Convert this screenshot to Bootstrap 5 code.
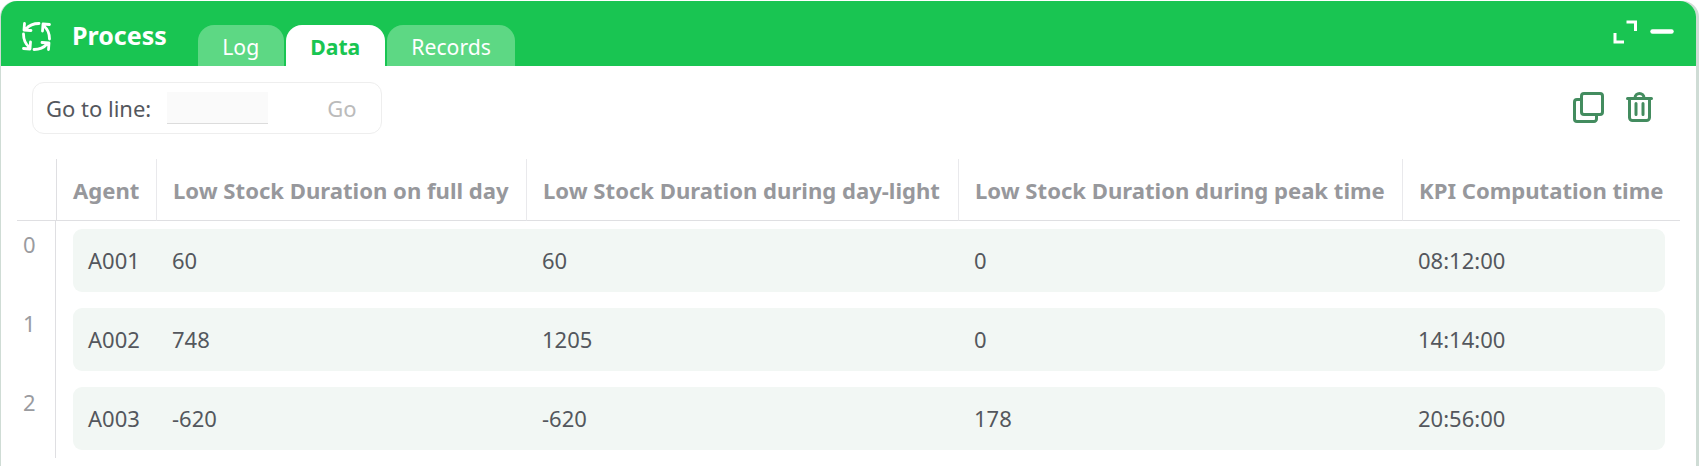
<!DOCTYPE html>
<html lang="en">
<head>
    <meta charset="UTF-8">
    <title>Process</title>
    <link href="https://cdn.jsdelivr.net/npm/bootstrap@5.3.0/dist/css/bootstrap.min.css" rel="stylesheet">
    <style>
        body {
            font-family: "Noto Sans", sans-serif;
            font-size: 22px;
            color: #54575d;
            background: #fff;
            overflow: hidden;
        }
        .proc-window {
            margin: 1px 4px 0 1px;
            height: 465px;
            border-radius: 16px 16px 0 0;
            box-shadow: -1px 0 0 #cfdcd5, 3px 0 0 #cfdcd5;
        }
        .proc-head {
            height: 65px;
            background: #19c552;
            color: #fff;
            border-radius: 16px 16px 0 0;
            padding-left: 20px;
            padding-right: 22px;
        }
        .proc-icon { width: 31px; height: 31px; margin-top: 20px; }
        .proc-title {
            font-size: 25px;
            font-weight: 700;
            margin: 18px 31px 0 20px;
            line-height: 32px;
        }
        .proc-tab {
            height: 41px;
            margin-top: 24px;
            margin-right: 2px;
            padding: 5px 24.5px 0;
            line-height: 33px;
            border-radius: 16px 16px 0 0;
            background: #5dd884;
            font-size: 21.2px;
        }
        .proc-tab.active-tab { background: #fff; color: #19c552; font-weight: 700; }
        .head-btns { margin-left: auto; padding-top: 19px; gap: 13px; }
        .goto-box {
            width: 350px;
            height: 52px;
            margin: 16px 0 0 31px;
            border: 1px solid #eeeeee;
            border-radius: 12px;
            padding-left: 13px;
        }
        .goto-input {
            width: 101px;
            height: 32px;
            margin-left: 16px;
            border: 0;
            border-bottom: 1px solid #dcdcdc;
            background: #fafafa;
            outline: 0;
        }
        .goto-go { margin-left: 59px; color: #bbbbbb; }
        .tool-btns { gap: 22px; margin: 26px 43px 0 0; }
        .data-grid {
            display: grid;
            grid-template-columns: 39px 100px 370px 432px 444px 278px;
            margin: 25px 0 0 16px;
            width: 1663px;
        }
        .head-cell {
            height: 62px;
            border-bottom: 1px solid #dfdfe2;
            border-left: 1px solid #e9e9ec;
            padding: 15px 0 0 16px;
            color: #97989c;
            font-size: 22.1px;
            font-weight: 700;
            white-space: nowrap;
        }
        .head-cell:first-child { border-left: 0; }
        .head-cell.first-col { border-left: 1px solid #dfdfe2; }
        .idx-col {
            height: 237px;
            border-right: 1px solid #dfdfe2;
            color: #9a9b9f;
            padding: 6px 0 0 6px;
        }
        .row-idx { height: 79px; line-height: 34px; }
        .data-rows {
            grid-column: 2 / 7;
            padding: 8px 15px 0 17px;
        }
        .data-line {
            display: grid;
            grid-template-columns: 84px 370px 432px 444px 1fr;
            height: 63px;
            margin-bottom: 16px;
            align-items: center;
            padding-left: 15px;
            background: #f2f7f4;
            border-radius: 9px;
        }
    </style>
</head>
<body>
    <div class="proc-window">
        <div class="proc-head d-flex align-items-start">
            <svg class="proc-icon" viewBox="0 0 31 31" fill="none" stroke="#fff" stroke-width="2.800" stroke-linecap="round" stroke-linejoin="round">
                <path d="M18 2.500C12 2.500 8 4.500 5 8M3.500 2.500 3 9l7 .5"/>
                <path d="M28.500 18C28.500 12 26.500 8 23 5M28.500 3.500 22 3l-.5 7"/>
                <path d="M13 28.500C19 28.500 23 26.500 26 23M27.500 28.500 28 22l-7-.5"/>
                <path d="M2.500 13C2.500 19 4.500 23 8 26M2.500 27.500 9 28l.5-7"/>
            </svg>
            <div class="proc-title">Process</div>
            <div class="proc-tab">Log</div>
            <div class="proc-tab active-tab">Data</div>
            <div class="proc-tab">Records</div>
            <div class="head-btns d-flex">
                <svg width="24" height="24" viewBox="0 0 24 24" fill="none" stroke="#fff" stroke-width="3" stroke-linecap="square">
                    <path d="M15 2h7.500v7.500M2 14.500V22h7.500"/>
                </svg>
                <svg width="24" height="24" viewBox="0 0 24 24" fill="none" stroke="#fff" stroke-width="4.500" stroke-linecap="round">
                    <path d="M2.500 11.500h19"/>
                </svg>
            </div>
        </div>
        <div class="d-flex justify-content-between align-items-start">
            <div class="goto-box d-flex align-items-center">
                <span>Go to line:</span>
                <input class="goto-input" type="text" aria-label="Go to line">
                <span class="goto-go">Go</span>
            </div>
            <div class="tool-btns d-flex">
                <svg width="31" height="31" viewBox="0 0 31 31" fill="none" stroke="#438c5f" stroke-width="3" stroke-linejoin="round">
                    <rect x="8.500" y="1.500" width="21" height="21" rx="2.500"/>
                    <path d="M7 7.500H4A2.500 2.500 0 0 0 1.500 10v17A2.500 2.500 0 0 0 4 29.500h17a2.500 2.500 0 0 0 2.500-2.500v-3"/>
                </svg>
                <svg width="27" height="31" viewBox="0 0 27 31" fill="none" stroke="#438c5f" stroke-width="3" stroke-linecap="round" stroke-linejoin="round">
                    <path d="M1.500 6.500h24M9 6c0-6 9-6 9 0M3.500 7v18.500a3 3 0 0 0 3 3h14a3 3 0 0 0 3-3V7M10 11.500v11M17 11.500v11"/>
                </svg>
            </div>
        </div>
        <div class="data-grid">
            <div class="head-cell"></div>
            <div class="head-cell first-col">Agent</div>
            <div class="head-cell">Low Stock Duration on full day</div>
            <div class="head-cell">Low Stock Duration during day-light</div>
            <div class="head-cell">Low Stock Duration during peak time</div>
            <div class="head-cell">KPI Computation time</div>

            <div class="idx-col">
                <div class="row-idx">0</div>
                <div class="row-idx">1</div>
                <div class="row-idx">2</div>
            </div>
            <div class="data-rows">
                <div class="data-line"><span>A001</span><span>60</span><span>60</span><span>0</span><span>08:12:00</span></div>
                <div class="data-line"><span>A002</span><span>748</span><span>1205</span><span>0</span><span>14:14:00</span></div>
                <div class="data-line"><span>A003</span><span>-620</span><span>-620</span><span>178</span><span>20:56:00</span></div>
            </div>
        </div>
    </div>
    <script src="https://cdn.jsdelivr.net/npm/bootstrap@5.3.0/dist/js/bootstrap.bundle.min.js"></script>
</body>
</html>
